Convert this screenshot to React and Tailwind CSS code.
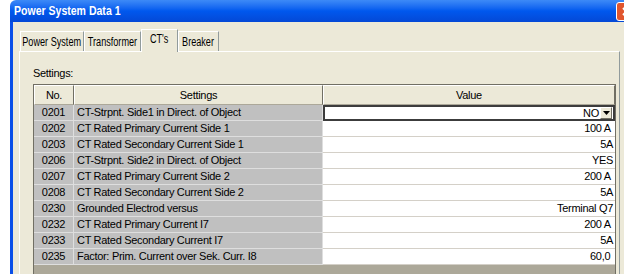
import React from 'react';

const rows = [
  ['0201', 'CT-Strpnt. Side1 in Direct. of Object', 'NO'],
  ['0202', 'CT Rated Primary Current Side 1', '100 A '],
  ['0203', 'CT Rated Secondary Current Side 1', '5A'],
  ['0206', 'CT-Strpnt. Side2 in Direct. of Object', 'YES'],
  ['0207', 'CT Rated Primary Current Side 2', '200 A '],
  ['0208', 'CT Rated Secondary Current Side 2', '5A'],
  ['0230', 'Grounded Electrod versus', 'Terminal Q7'],
  ['0232', 'CT Rated Primary Current I7', '200 A '],
  ['0233', 'CT Rated Secondary Current I7', '5A'],
  ['0235', 'Factor: Prim. Current over Sek. Curr. I8', '60,0 '],
];

// tab widths measured off the picture
const tabs = [
  { label: 'Power System', w: 'w-[64px]' },
  { label: 'Transformer', w: 'w-[57px]' },
  { label: "CT's", w: 'w-[37px]', active: true },
  { label: 'Breaker', w: 'w-[41px]' },
];

const Tab = ({ label, w, active }) => (
  <div
    className={`flex shrink-0 items-center justify-center border-t border-l border-white border-r border-r-[#919b9c] bg-[#ece9d8] ${w} ${
      active ? 'relative z-10 -mb-px h-[23px] pb-[4px]' : 'mt-[2px] h-[20px]'
    }`}
  >
    <span className="inline-block scale-x-[0.76] whitespace-nowrap text-[12px]">{label}</span>
  </div>
);

const App = () => {
  return (
    <div className="flex h-[274px] w-[624px] overflow-hidden bg-white text-[11px] text-black" style={{ fontFamily: '"Liberation Sans", Arial, sans-serif' }}>
      <div className="w-[10px] shrink-0" />
      <div className="flex w-[636px] shrink-0 flex-col">
        {/* title bar */}
        <div className="flex h-[22px] shrink-0 items-center rounded-tl-[6px] bg-gradient-to-b from-[#3d8af7] via-[#0058ee] to-[#0448d6] pl-[4px]">
          <span className="inline-block origin-left scale-x-[0.81] whitespace-nowrap text-[13px] font-bold text-white">Power System Data 1</span>
          <div className="flex-1" />
          <div className="mr-[9px] flex h-[19px] w-[21px] shrink-0 items-center justify-center rounded-[3px] border border-white bg-[#e0562e]">
            <svg width="9" height="9" viewBox="0 0 9 9">
              <path d="M1 1l7 7M8 1L1 8" stroke="#fff" strokeWidth="2" />
            </svg>
          </div>
        </div>
        {/* body */}
        <div className="flex flex-1 flex-col border-l-[3px] border-[#0a4fe8] bg-[#ece9d8] pt-[7px] pl-[6px]">
          <div className="flex h-[22px] pl-[1px]">
            {tabs.map((t) => (
              <Tab key={t.label} {...t} />
            ))}
          </div>
          <div className="flex w-[601px] flex-1 flex-col border-t border-l border-white border-r border-r-[#919b9c] pl-[13px] pt-[11px]">
            <div className="h-[21px] leading-[21px] tracking-[-0.3px]">Settings:</div>
            <div className="flex w-[583px] flex-1 flex-col border border-b-0 border-[#716f64] bg-[#aca899] tracking-[-0.3px]">
              <div className="flex h-[20px] shrink-0 bg-[#ece9d8]">
                <div className="flex w-[40px] items-center justify-center border-t border-l border-white border-r border-b border-r-[#716f64] border-b-[#aca899]">No.</div>
                <div className="flex w-[249px] items-center justify-center border-t border-l border-white border-r border-b border-r-[#716f64] border-b-[#aca899]">Settings</div>
                <div className="flex flex-1 items-center justify-center border-t border-l border-white border-r border-b border-r-[#716f64] border-b-[#aca899]">Value</div>
              </div>
              {rows.map(([no, name, val], i) => (
                <div key={no} className="flex h-[16px] shrink-0">
                  <div className="flex w-[40px] items-center justify-center border-r border-b border-[#dedede] bg-[#c0c0c0]">{no}</div>
                  <div className="flex w-[249px] items-center border-r border-b border-[#dedede] bg-[#c0c0c0] pl-[3px]">{name}</div>
                  {i === 0 ? (
                    <div className="flex flex-1 items-center justify-end border-2 border-[#3c3c3c] bg-white pr-px">
                      <span>{val}</span>
                      <div className="ml-[1px] flex h-[12px] w-[12px] items-center justify-center border border-t-white border-l-white border-r-[#716f64] border-b-[#716f64] bg-[#ece9d8]">
                        <svg width="7" height="4" viewBox="0 0 7 4"><path d="M0 0h7L3.5 4z" fill="#000" /></svg>
                      </div>
                    </div>
                  ) : (
                    <div className="flex flex-1 items-center justify-end whitespace-pre border-b border-[#d4d0c8] bg-white pr-[2px]">{val}</div>
                  )}
                </div>
              ))}
            </div>
          </div>
        </div>
      </div>
    </div>
  );
};

export default App;
